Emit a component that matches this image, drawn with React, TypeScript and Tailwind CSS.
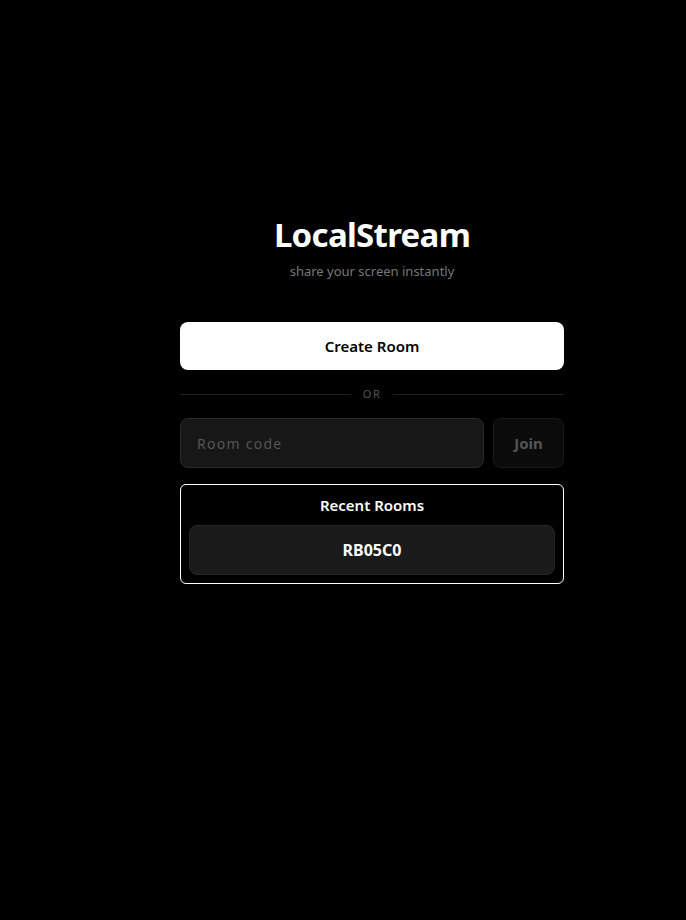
import { useState } from "react";

export default function App() {
  const [code, setCode] = useState("");
  const recent = ["RB05C0"];

  return (
    <div
      className="min-h-screen w-full bg-black text-white flex justify-center pl-[58px]"
      style={{ fontFamily: '"Noto Sans", "Open Sans", sans-serif' }}
    >
      <div className="w-[384px] pt-[213px] flex flex-col">
        <div className="flex flex-col items-center">
          <h1 className="text-[33px] leading-[44px] font-bold tracking-[-0.7px]">
            LocalStream
          </h1>
          <p className="text-[13px] leading-[18px] text-[#777] mt-[5px]">
            share your screen instantly
          </p>
        </div>

        <button className="mt-[42px] h-[48px] w-full rounded-lg bg-white text-black text-[15px] font-semibold">
          Create Room
        </button>

        <div className="flex items-center gap-3 my-[17px]">
          <div className="h-px flex-1 bg-[#222]" />
          <span className="text-[11px] leading-[14px] tracking-[0.15em] text-[#555]">OR</span>
          <div className="h-px flex-1 bg-[#222]" />
        </div>

        <div className="flex gap-[9px]">
          <input
            value={code}
            onChange={(e) => setCode(e.target.value)}
            placeholder="Room code"
            className="h-[50px] flex-1 min-w-0 rounded-lg bg-[#171717] border border-[#2a2a2a] px-4 text-[14px] tracking-[0.09em] text-white placeholder:text-[#555] outline-none"
          />
          <button className="h-[50px] w-[71px] rounded-lg bg-[#0b0b0b] border border-[#1a1a1a] text-[15px] font-bold text-[#555]">
            Join
          </button>
        </div>

        <div className="mt-[16px] rounded-md border border-white px-2 pt-[9px] pb-2 flex flex-col">
          <h2 className="text-center text-[15px] leading-[22px] font-semibold">Recent Rooms</h2>
          <div className="mt-[9px] flex flex-col gap-2">
            {recent.map((r) => (
              <button
                key={r}
                className="h-[50px] w-full rounded-lg bg-[#1a1a1a] border border-[#262626] text-[16px] font-bold"
              >
                {r}
              </button>
            ))}
          </div>
        </div>
      </div>
    </div>
  );
}
